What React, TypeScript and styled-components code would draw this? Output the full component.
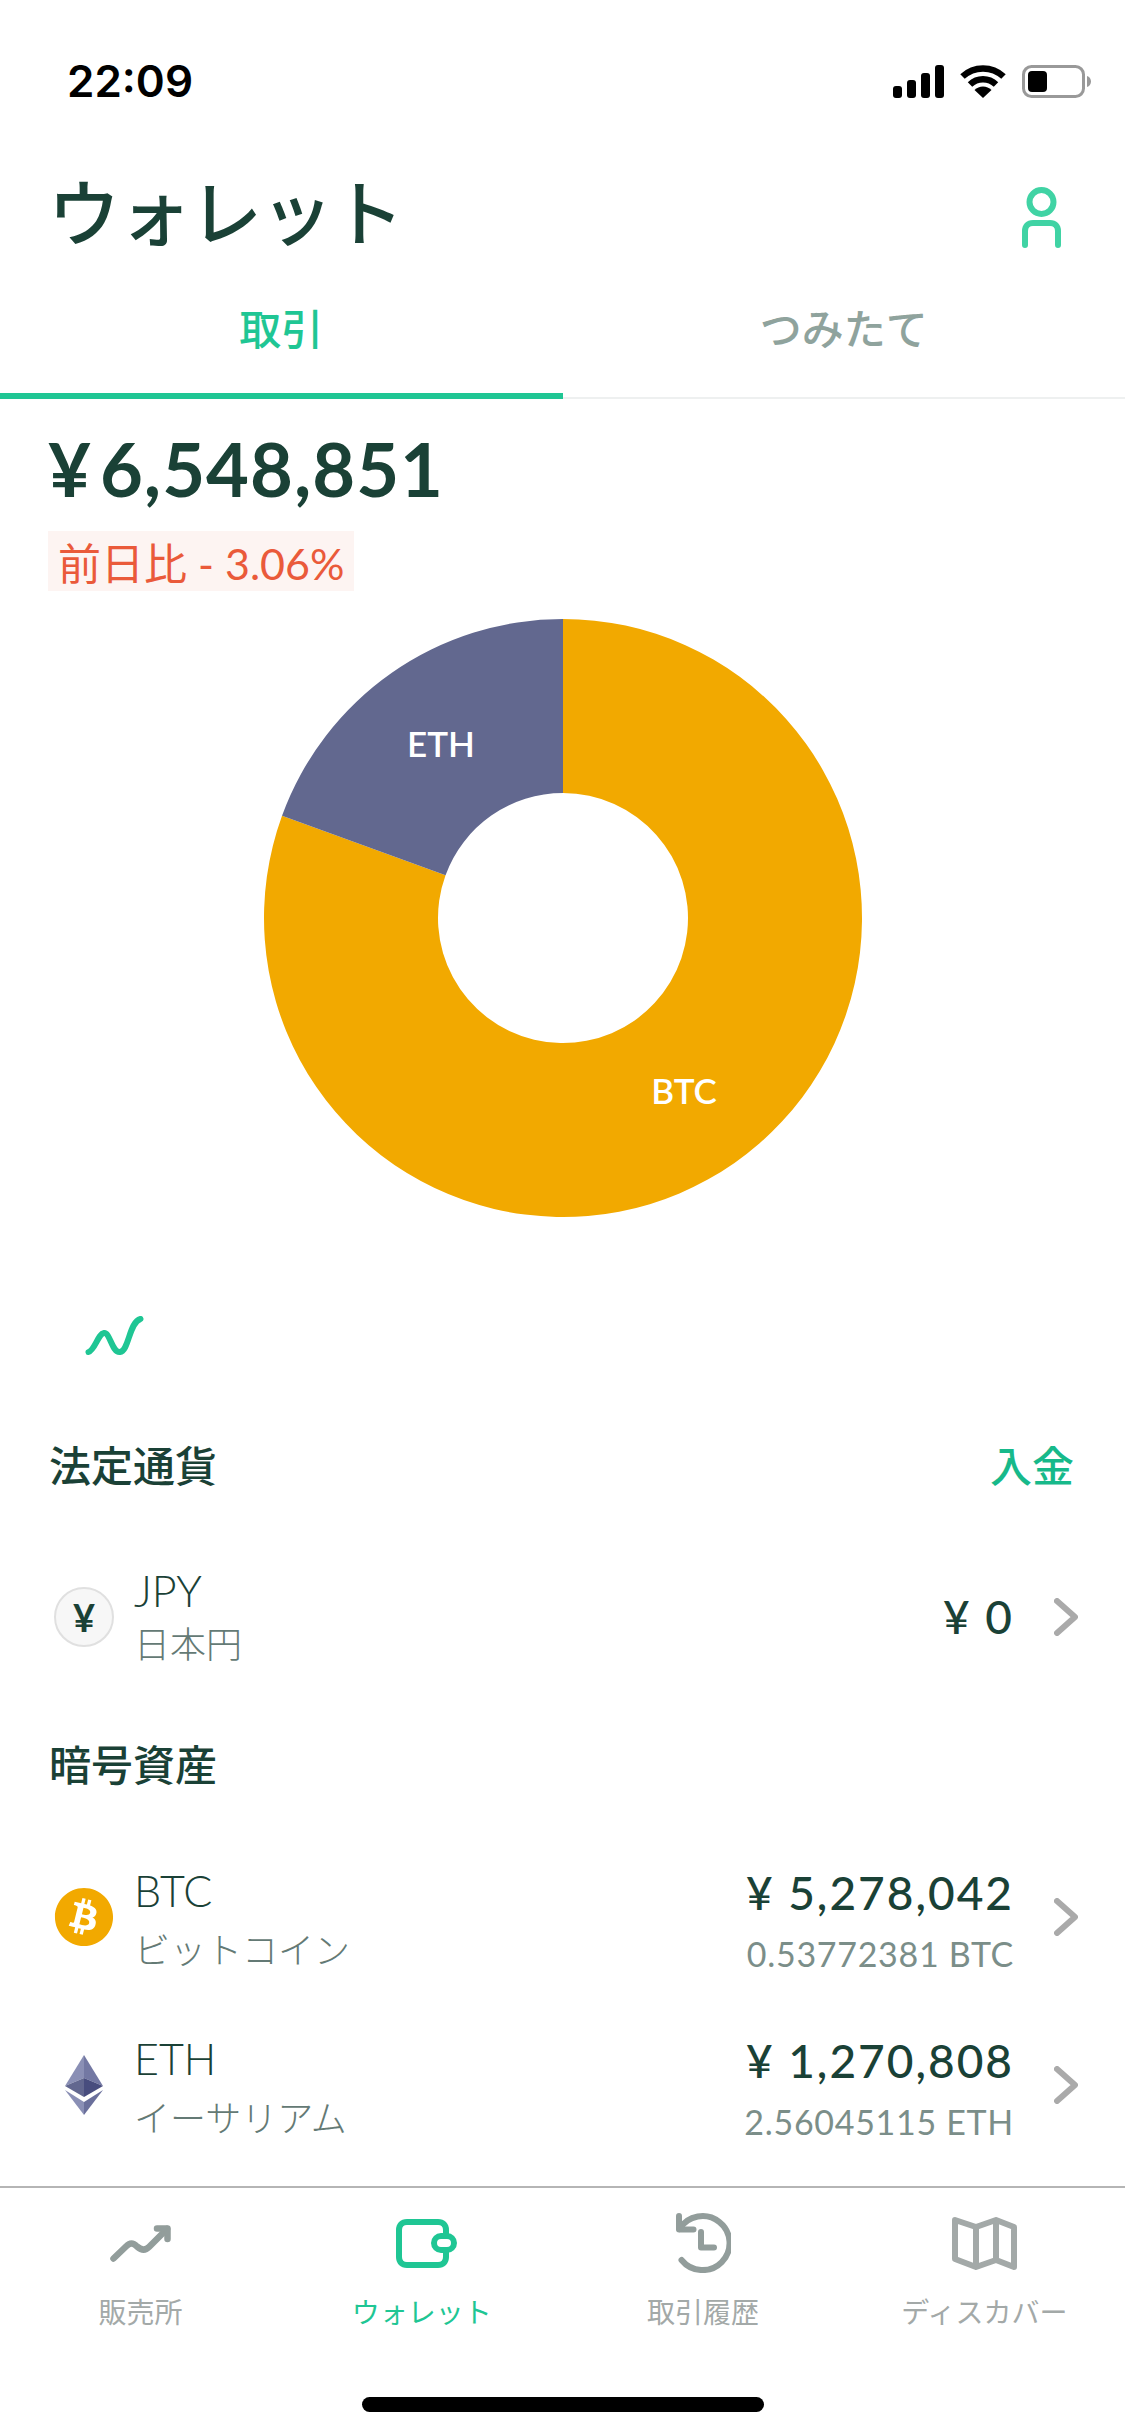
import React from 'react';
import styled, { createGlobalStyle } from 'styled-components';
import { FaBitcoin } from 'react-icons/fa';

const GREEN = '#1fc694';
const DARK = '#1a4136';
const SUB = '#647a75';
const GRAY = '#a3a9a8';

const GlobalStyle = createGlobalStyle`
  html, body {
    margin: 0;
    padding: 0;
    background: #fff;
  }
  * {
    box-sizing: border-box;
  }
`;

const Screen = styled.div`
  width: 1125px;
  height: 2436px;
  display: flex;
  flex-direction: column;
  background: #fff;
  color: ${DARK};
  font-family: Lato, 'Noto Sans CJK JP', sans-serif;
  overflow: hidden;
`;

const StatusBar = styled.div`
  height: 130px;
  padding: 56px 34px 0 67px;
  display: flex;
  justify-content: space-between;
  align-items: flex-start;
`;

const Time = styled.span`
  font-family: Inter, sans-serif;
  font-weight: 600;
  font-size: 44px;
  line-height: 50px;
  color: #000;
`;

const StatusIcons = styled.div`
  display: flex;
  align-items: center;
  height: 50px;
  gap: 16px;
`;

const Header = styled.header`
  height: 150px;
  padding: 14px 64px 0 48px;
  display: flex;
  justify-content: space-between;
  align-items: center;
`;

const Title = styled.h1`
  margin: 0;
  font-size: 72px;
  line-height: 100px;
  font-weight: 500;
  letter-spacing: -1px;
`;

const PersonIcon = styled.svg`
  margin-top: 10px;
`;

const Tabs = styled.nav`
  height: 119px;
  display: flex;
  border-bottom: 2px solid #eef0f0;
`;

const Tab = styled.div<{ $active?: boolean }>`
  flex: 1;
  display: flex;
  align-items: center;
  justify-content: center;
  padding-bottom: 20px;
  margin-bottom: -2px;
  font-size: 42px;
  font-weight: 500;
  color: ${(p) => (p.$active ? GREEN : '#8fa39d')};
  border-bottom: 6px solid ${(p) => (p.$active ? GREEN : 'transparent')};
`;

const Summary = styled.section`
  padding: 24px 48px 0;
  display: flex;
  flex-direction: column;
  align-items: flex-start;
`;

const Total = styled.div`
  font-size: 74px;
  line-height: 92px;
  font-weight: 700;
  letter-spacing: 1px;
`;

const TotalYen = styled.span`
  margin-right: 8px;
`;

const Change = styled.div`
  margin-top: 16px;
  height: 60px;
  padding: 0 10px;
  display: flex;
  align-items: center;
  background: #fdf4f2;
  color: #ea5a3a;
  font-size: 43px;
`;

const ChartWrap = styled.div`
  margin-top: 27px;
  display: flex;
  justify-content: center;
`;

const ChartLabel = styled.text`
  fill: #fff;
  font-size: 35px;
  font-weight: 600;
  text-anchor: middle;
`;

const TrendToggle = styled.div`
  margin-top: 97px;
  padding-left: 85px;
  height: 42px;
  display: flex;
  align-items: center;
`;

const SectionHead = styled.div<{ $top: number }>`
  margin-top: ${(p) => p.$top}px;
  padding: 0 51px 0 49px;
  display: flex;
  justify-content: space-between;
  align-items: center;
  height: 60px;
  font-size: 42px;
  font-weight: 500;
`;

const Deposit = styled.span`
  color: #17b98a;
`;

const Row = styled.div<{ $top: number }>`
  margin-top: ${(p) => p.$top}px;
  height: 108px;
  padding: 0 47px 0 54px;
  display: flex;
  align-items: center;
`;

const CoinSlot = styled.div`
  width: 60px;
  height: 60px;
  display: flex;
  align-items: center;
  justify-content: center;
  flex-shrink: 0;
`;

const YenCoin = styled.div`
  width: 60px;
  height: 60px;
  border-radius: 50%;
  background: #f7f7f7;
  border: 2px solid #e0e0e0;
  display: flex;
  align-items: center;
  justify-content: center;
  font-size: 38px;
  font-weight: 700;
  color: ${DARK};
`;

const Names = styled.div<{ $fiat?: boolean }>`
  margin-left: 20px;
  flex: 1;
  display: flex;
  flex-direction: column;
  gap: ${(p) => (p.$fiat ? 3 : 9)}px;
  padding-top: ${(p) => (p.$fiat ? 0 : 6)}px;
`;

const Symbol = styled.span`
  font-size: 43px;
  line-height: 50px;
  font-weight: 300;
`;

const SubText = styled.span`
  font-size: 36px;
  line-height: 50px;
  font-weight: 300;
  color: ${SUB};
  white-space: nowrap;
`;

const Amounts = styled.div`
  display: flex;
  flex-direction: column;
  align-items: flex-end;
  gap: 16px;
  padding-top: 8px;
`;

const Amount = styled.span`
  font-size: 46px;
  line-height: 50px;
  font-weight: 500;
  letter-spacing: 2px;
  white-space: pre;
`;

const AmountSub = styled.span`
  font-size: 34px;
  line-height: 40px;
  color: #7b8e89;
  letter-spacing: 0.7px;
`;

const Chevron = styled.svg`
  margin-left: 40px;
  flex-shrink: 0;
`;

const Spacer = styled.div`
  flex: 1;
`;

const TabBar = styled.footer`
  height: 250px;
  border-top: 2px solid #b5b5b5;
  display: flex;
  flex-direction: column;
`;

const TabBarItems = styled.div`
  display: grid;
  grid-template-columns: repeat(4, 1fr);
  height: 145px;
`;

const TabBarItem = styled.div<{ $active?: boolean }>`
  display: flex;
  flex-direction: column;
  align-items: center;
  color: ${(p) => (p.$active ? GREEN : GRAY)};
  font-size: 28px;
  line-height: 40px;
`;

const TabIconBox = styled.div`
  height: 104px;
  padding-top: 6px;
  display: flex;
  align-items: center;
  justify-content: center;
`;

const WalletSvg = styled.svg`
  margin-left: 10px;
`;

const HomeBar = styled.div`
  align-self: center;
  margin-top: 64px;
  width: 402px;
  height: 15px;
  border-radius: 8px;
  background: #000;
`;

// donut slices are worked out around the centre of a 600 box
const polar = (r: number, deg: number) => {
  const a = ((deg - 90) * Math.PI) / 180;
  return [300 + r * Math.cos(a), 300 + r * Math.sin(a)];
};

const slice = (from: number, to: number, outer: number, inner: number) => {
  const [x1, y1] = polar(outer, from);
  const [x2, y2] = polar(outer, to);
  const [x3, y3] = polar(inner, to);
  const [x4, y4] = polar(inner, from);
  const large = to - from > 180 ? 1 : 0;
  return `M${x1} ${y1}A${outer} ${outer} 0 ${large} 1 ${x2} ${y2}L${x3} ${y3}A${inner} ${inner} 0 ${large} 0 ${x4} ${y4}Z`;
};

const Donut = () => (
  <svg width="600" height="600" viewBox="0 0 600 600">
    <path d={slice(0, 290, 299, 125)} fill="#f2a900" />
    <path d={slice(290, 360, 299, 125)} fill="#62688f" />
    <ChartLabel x="178" y="139">ETH</ChartLabel>
    <ChartLabel x="421" y="486">BTC</ChartLabel>
  </svg>
);

const Signal = () => (
  <svg width="51" height="33" viewBox="0 0 51 33" fill="#000">
    <rect x="0" y="21" width="9" height="12" rx="3" />
    <rect x="14" y="15" width="9" height="18" rx="3" />
    <rect x="28" y="8" width="9" height="25" rx="3" />
    <rect x="42" y="0" width="9" height="33" rx="3" />
  </svg>
);

const Wifi = () => (
  <svg width="46" height="33" viewBox="0 0 46 33" fill="none" stroke="#000" strokeWidth="6.5">
    <path d="M2.5 11.5a30 30 0 0 1 41 0" />
    <path d="M10 19.5a19 19 0 0 1 26 0" />
    <path d="M23 33l-8.5-8a12 12 0 0 1 17 0z" fill="#000" stroke="none" />
  </svg>
);

const Battery = () => (
  <svg width="69" height="33" viewBox="0 0 69 33">
    <rect x="1.5" y="1.5" width="60" height="30" rx="8" fill="none" stroke="#999" strokeWidth="3" />
    <rect x="6" y="6" width="19" height="21" rx="4" fill="#000" />
    <path d="M65 11c2.500 .8 4 3 4 5.500s-1.500 4.700-4 5.500z" fill="#999" />
  </svg>
);

const Person = () => (
  <PersonIcon width="39" height="61" viewBox="0 0 39 61" fill="none" stroke="#40d3a4" strokeWidth="6" strokeLinecap="round">
    <circle cx="19.500" cy="15" r="12" />
    <path d="M3 58V44c0-5 3-8 8-8h17c5 0 8 3 8 8v14" />
  </PersonIcon>
);

const Wave = () => (
  <svg width="59" height="40" viewBox="0 0 59 40" fill="none" stroke={GREEN} strokeWidth="6" strokeLinecap="round">
    <path d="M3.500 36C10 34 13 18 19 17c6-1 8 20 16 19 9-1 9-30 20.500-33" />
  </svg>
);

const ChevronIcon = () => (
  <Chevron width="24" height="38" viewBox="0 0 24 38" fill="none" stroke="#aaa" strokeWidth="6" strokeLinecap="round" strokeLinejoin="round">
    <path d="M3 3l18 16L3 35" />
  </Chevron>
);

const Ethereum = () => (
  <svg width="38" height="60" viewBox="0 0 38 60">
    <path d="M19 0L0 31l19-8z" fill="#8a8fb5" />
    <path d="M19 0l19 31-19-8z" fill="#7378a3" />
    <path d="M19 23L0 31l19 11z" fill="#62678f" />
    <path d="M19 23l19 8-19 11z" fill="#484d7e" />
    <path d="M0 35l19 25V47z" fill="#8a8fb5" />
    <path d="M38 35L19 60V47z" fill="#6a6f9b" />
  </svg>
);

const ChartIcon = () => (
  <svg width="61" height="37" viewBox="0 0 61 37" fill="none" stroke="#929d9b" strokeWidth="6.500" strokeLinecap="round" strokeLinejoin="round">
    <path d="M3.500 33.500L16 21.500c4-4 7-4 11 0 4 3.500 8 4.500 12 .5L57 4" />
    <path d="M47 3.500h10.500V14" />
  </svg>
);

const WalletIcon = () => (
  <WalletSvg width="61" height="49" viewBox="0 0 61 49" fill="none" stroke={GREEN} strokeWidth="6" strokeLinecap="round">
    <path d="M50 15V11c0-5-3-8-8-8H11c-5 0-8 3-8 8v27c0 5 3 8 8 8h31c5 0 8-3 8-8v-5" />
    <rect x="38" y="17" width="20" height="14" rx="7" />
  </WalletSvg>
);

const HistoryIcon = () => (
  <svg width="55" height="60" viewBox="0 0 55 60" fill="none" stroke="#929d9b" strokeWidth="6" strokeLinecap="round" strokeLinejoin="round">
    <path d="M3.500 16A27 27 0 1 1 5.500 47" />
    <path d="M3 3v13.500h14.500" />
    <path d="M25 19v15.500h13" />
  </svg>
);

const MapIcon = () => (
  <svg width="65" height="53" viewBox="0 0 65 53" fill="none" stroke="#a3a9a8" strokeWidth="6" strokeLinejoin="round">
    <path d="M3 3l21 7 20-7 18 7v40l-18-7-20 7-21-8z" />
    <path d="M24 10v40M44 3v40" />
  </svg>
);

export default function App() {
  return (
    <Screen>
      <GlobalStyle />
      <StatusBar>
        <Time>22:09</Time>
        <StatusIcons>
          <Signal />
          <Wifi />
          <Battery />
        </StatusIcons>
      </StatusBar>

      <Header>
        <Title>ウォレット</Title>
        <Person />
      </Header>

      <Tabs>
        <Tab $active>取引</Tab>
        <Tab>つみたて</Tab>
      </Tabs>

      <Summary>
        <Total><TotalYen>¥</TotalYen>6,548,851</Total>
        <Change>前日比 - 3.06%</Change>
      </Summary>

      <ChartWrap>
        <Donut />
      </ChartWrap>

      <TrendToggle>
        <Wave />
      </TrendToggle>

      <SectionHead $top={76}>
        <span>法定通貨</span>
        <Deposit>入金</Deposit>
      </SectionHead>

      <Row $top={70}>
        <CoinSlot>
          <YenCoin>¥</YenCoin>
        </CoinSlot>
        <Names $fiat>
          <Symbol>JPY</Symbol>
          <SubText>日本円</SubText>
        </Names>
        <Amount>¥ 0</Amount>
        <ChevronIcon />
      </Row>

      <SectionHead $top={61}>
        <span>暗号資産</span>
      </SectionHead>

      <Row $top={71}>
        <CoinSlot>
          <FaBitcoin size={62} color="#f2a900" />
        </CoinSlot>
        <Names>
          <Symbol>BTC</Symbol>
          <SubText>ビットコイン</SubText>
        </Names>
        <Amounts>
          <Amount>¥ 5,278,042</Amount>
          <AmountSub>0.53772381 BTC</AmountSub>
        </Amounts>
        <ChevronIcon />
      </Row>

      <Row $top={60}>
        <CoinSlot>
          <Ethereum />
        </CoinSlot>
        <Names>
          <Symbol>ETH</Symbol>
          <SubText>イーサリアム</SubText>
        </Names>
        <Amounts>
          <Amount>¥ 1,270,808</Amount>
          <AmountSub>2.56045115 ETH</AmountSub>
        </Amounts>
        <ChevronIcon />
      </Row>

      <Spacer />

      <TabBar>
        <TabBarItems>
          <TabBarItem>
            <TabIconBox><ChartIcon /></TabIconBox>
            販売所
          </TabBarItem>
          <TabBarItem $active>
            <TabIconBox><WalletIcon /></TabIconBox>
            ウォレット
          </TabBarItem>
          <TabBarItem>
            <TabIconBox><HistoryIcon /></TabIconBox>
            取引履歴
          </TabBarItem>
          <TabBarItem>
            <TabIconBox><MapIcon /></TabIconBox>
            ディスカバー
          </TabBarItem>
        </TabBarItems>
        <HomeBar />
      </TabBar>
    </Screen>
  );
}
